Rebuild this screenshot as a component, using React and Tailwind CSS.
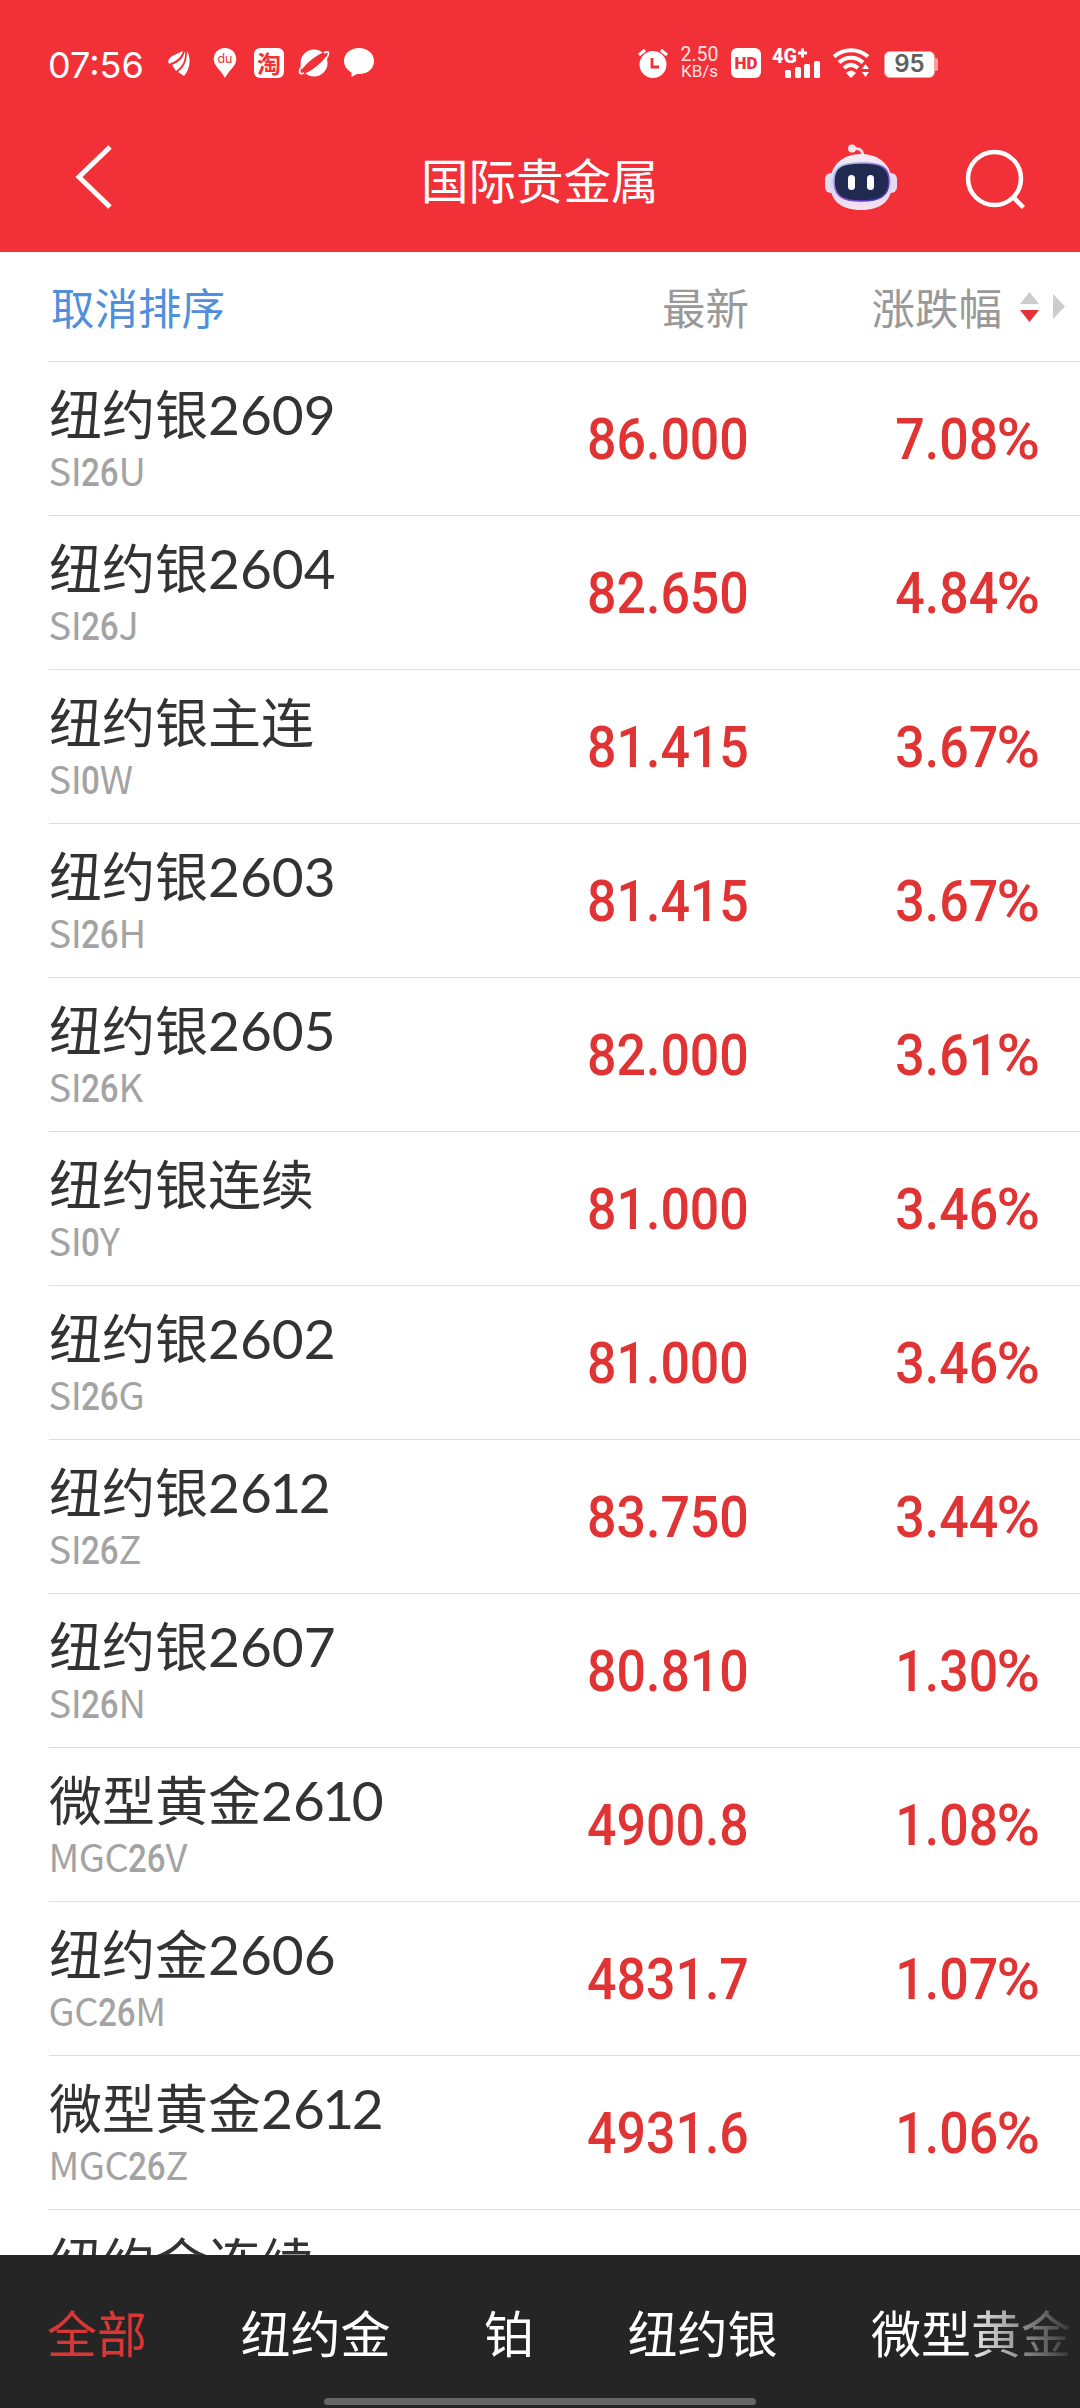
const quotes = [
  { name: "纽约银", month: "2609", code: "SI26U", price: "86.000", change: "7.08" },
  { name: "纽约银", month: "2604", code: "SI26J", price: "82.650", change: "4.84" },
  { name: "纽约银主连", month: "", code: "SI0W", price: "81.415", change: "3.67" },
  { name: "纽约银", month: "2603", code: "SI26H", price: "81.415", change: "3.67" },
  { name: "纽约银", month: "2605", code: "SI26K", price: "82.000", change: "3.61" },
  { name: "纽约银连续", month: "", code: "SI0Y", price: "81.000", change: "3.46" },
  { name: "纽约银", month: "2602", code: "SI26G", price: "81.000", change: "3.46" },
  { name: "纽约银", month: "2612", code: "SI26Z", price: "83.750", change: "3.44" },
  { name: "纽约银", month: "2607", code: "SI26N", price: "80.810", change: "1.30" },
  { name: "微型黄金", month: "2610", code: "MGC26V", price: "4900.8", change: "1.08" },
  { name: "纽约金", month: "2606", code: "GC26M", price: "4831.7", change: "1.07" },
  { name: "微型黄金", month: "2612", code: "MGC26Z", price: "4931.6", change: "1.06" },
  { name: "纽约金连续", month: "", code: "", price: "", change: "" },
];

const tabs = ["全部", "纽约金", "铂", "纽约银", "微型黄金"];

export default function App() {
  return (
    <div className="flex h-[2408px] w-[1080px] flex-col overflow-hidden bg-white font-['Noto_Sans_CJK_SC',sans-serif]">
      <header className="h-[252px] shrink-0 bg-[#f23037] text-white">
        <StatusBar />
        <TitleBar />
      </header>

      <main className="min-h-0 flex-1 overflow-hidden pl-[49px]">
        <ColumnHeader />
        {quotes.map((q) => (
          <QuoteRow key={q.name + q.month} quote={q} />
        ))}
      </main>

      <BottomTabs />
    </div>
  );
}

function StatusBar() {
  return (
    <div className="flex h-[124px] items-center pt-1 pl-[48px]">
      <span className="mt-0.5 w-[120px] font-['Inter',sans-serif] text-[36px] leading-none whitespace-nowrap">07:56</span>

      {/* Notification icons */}
      <div className="mb-0.5 flex h-8 items-center">
        <svg width="22" height="26" viewBox="0 0 22 26" className="fill-white">
          <path d="M0 11C3 5 9 4 15 1C13 8 8 11 1 14Z" />
          <path d="M17 1C15 9 11 12 4 15L8 21C14 17 18 10 17 1Z" />
          <path d="M19 1C19 12 16 17 10 22L16 26C21 20 24 10 19 1Z" />
        </svg>
        <svg width="24" height="30" viewBox="0 0 24 30" className="ml-[23px]">
          <path d="M12 0C5 0 .7 5 .7 11.5C.7 18 8 22 12 30C16 22 23.3 18 23.3 11.5C23.3 5 19 0 12 0Z" fill="#fff" />
          <text x="12" y="15" textAnchor="middle" fontSize="12.5" fontFamily="Inter" fill="#f23037">du</text>
        </svg>
        <span className="ml-[17px] flex size-[30px] items-center justify-center rounded-[6px] bg-white text-[24px] leading-none font-bold text-[#f23037]">淘</span>
        <svg width="32" height="30" viewBox="0 0 32 30" className="ml-[14px]">
          <circle cx="16" cy="15" r="13.5" fill="#fff" />
          <ellipse cx="16" cy="15" rx="17" ry="4.2" transform="rotate(-39 16 15)" fill="#f23037" />
          <path d="M4 18C0 24 1 27 6 25M26 5C31 2 32 5 28 11" fill="none" stroke="#fff" strokeWidth="1.8" />
        </svg>
        <svg width="30" height="30" viewBox="0 0 30 30" className="ml-[14px] fill-white">
          <path d="M15 0C6.5 0 0 5.5 0 13C0 18 3 22 7.5 24.5L7.5 29L13 26C23 27 30 21 30 13C30 5.5 23.5 0 15 0Z" />
        </svg>
      </div>

      {/* System icons */}
      <div className="mb-0.5 ml-[264px] flex h-8 items-center">
        <svg width="30" height="30" viewBox="0 0 30 30">
          <circle cx="15" cy="16.5" r="13.5" fill="#fff" />
          <path d="M1 7L7 2M29 7L23 2" stroke="#fff" strokeWidth="3" />
          <path d="M14 10V19H21" fill="none" stroke="#f23037" strokeWidth="2.8" />
        </svg>
        <span className="ml-[11px] flex w-[41px] flex-col items-center font-['Roboto',sans-serif] text-[17px] leading-[16px] whitespace-nowrap text-[#ffe3e4]">
          <span className="text-[19.5px]">2.50</span>
          <span>KB/s</span>
        </span>
        <span className="ml-[11px] flex size-[30px] items-center justify-center rounded-[6px] bg-white font-['Roboto',sans-serif] text-[17px] leading-none font-black text-[#f23037]">HD</span>
        <svg width="50" height="32" viewBox="0 0 50 32" className="ml-[11px] overflow-visible fill-white">
          <text x="0" y="16" fontSize="19.5" fontWeight="800" fontFamily="Roboto" textLength="25" lengthAdjust="spacingAndGlyphs">4G</text>
          <path d="M26 4.5H29V1.5H32V4.5H35V7.5H32V10.5H29V7.5H26Z" />
          <rect x="13" y="23" width="6" height="8" rx="1.5" />
          <rect x="23" y="20" width="6" height="11" rx="1.5" />
          <rect x="32" y="17" width="6" height="14" rx="1.5" />
          <rect x="42" y="14" width="6" height="17" rx="1.5" />
        </svg>
        <svg width="38" height="30" viewBox="0 0 38 30" className="ml-[10px]">
          <path d="M2 8.5C12 0 26 0 36 8.5M7 14.5C14 8 24 8 31 14.5M12 20C16.5 16 21.5 16 26 20" fill="none" stroke="#fff" strokeWidth="4" />
          <path d="M14 25Q19 20 24 25L19 30Z" fill="#fff" />
          <path d="M30 21L33.5 16L37 21ZM30 24L33.5 29L37 24Z" fill="#fff" />
        </svg>
        <div className="mt-0.5 ml-[14px] flex items-center">
          <span className="flex h-[27px] w-[51px] items-center justify-center rounded-[6px] border border-[#f9a0a4] bg-white font-['Inter',sans-serif] text-[24px] leading-none font-semibold text-[#606060]">95</span>
          <span className="h-[13px] w-[3px] rounded-r-[2px] bg-[#f99ba0]" />
        </div>
      </div>
    </div>
  );
}

function TitleBar() {
  return (
    <div className="flex h-[128px] items-center">
      <svg width="42" height="66" viewBox="0 0 42 66" className="mb-[22px] ml-[74px] fill-none stroke-white">
        <path d="M36 3L5 33L36 63" strokeWidth="5" />
      </svg>
      <h1 className="mb-[18px] ml-[305px] w-[240px] text-[47.5px] leading-none whitespace-nowrap">国际贵金属</h1>
      <Robot />
      <svg width="62" height="62" viewBox="0 0 62 62" className="mb-[16px] ml-[67px] fill-none stroke-white">
        <circle cx="29.5" cy="29.5" r="26.5" strokeWidth="4.5" />
        <path d="M48 48L58.5 58.5" strokeWidth="4.5" />
      </svg>
    </div>
  );
}

function Robot() {
  return (
    <svg width="74" height="68" viewBox="0 0 74 68" className="mb-[23px] ml-[163px]">
      <defs>
        <linearGradient id="shell" x1="0" y1="0" x2="0" y2="1">
          <stop offset="0" stopColor="#fbeef6" />
          <stop offset="0.5" stopColor="#d6d2f2" />
          <stop offset="1" stopColor="#f6e3f0" />
        </linearGradient>
        <linearGradient id="rim" x1="0" y1="0" x2="1" y2="1">
          <stop offset="0" stopColor="#a9e0f2" />
          <stop offset="0.5" stopColor="#8a4fd6" />
          <stop offset="1" stopColor="#3b2cae" />
        </linearGradient>
      </defs>
      <path d="M28 6C35 4 39 7 39 14" fill="none" stroke="#f7d9e6" strokeWidth="3" />
      <circle cx="28" cy="5.5" r="4" fill="#f7e3ee" />
      <rect x="1" y="30" width="14" height="20" rx="6" fill="#e3dcf3" />
      <rect x="59" y="30" width="14" height="20" rx="6" fill="#e3dcf3" />
      <path d="M37 11C55 11 68 22 68 40C68 58 57 67 37 67C17 67 6 58 6 40C6 22 19 11 37 11Z" fill="url(#shell)" />
      <path d="M37 20C57 20 65 24 65 38C65 53 56 58 37 58C18 58 10 53 10 38C10 24 17 20 37 20Z" fill="#202a50" stroke="url(#rim)" strokeWidth="1.5" />
      <rect x="24" y="32" width="7" height="15" rx="3.5" fill="#fff" />
      <rect x="43" y="32" width="7" height="15" rx="3.5" fill="#fff" />
    </svg>
  );
}

function ColumnHeader() {
  return (
    <div className="flex h-[110px] items-center border-b border-[#dedede] text-[43.5px] leading-none text-[#999]">
      <span className="w-[500px] pl-[2px] text-[#4f8fdb]">取消排序</span>
      <span className="w-[200px] text-right">最新</span>
      <span className="w-[253px] text-right">涨跌幅</span>
      <svg width="46" height="32" viewBox="0 0 46 32" className="mt-[1px] ml-[18px]">
        <path d="M0 13L9.5 1L19 13Z" fill="#ccc" />
        <path d="M0 19H19L9.5 31Z" fill="#e33235" />
        <path d="M33 3L45 15.5L33 28Z" fill="#ccc" />
      </svg>
    </div>
  );
}

function QuoteRow({ quote }) {
  return (
    <div className="flex h-[154px] border-b border-[#dedede]">
      <div className="w-[450px]">
        <div className="mt-[23px] h-[54px] text-[53px] leading-[54px] whitespace-nowrap text-[#333]">
          {quote.name}
          <Month value={quote.month} />
        </div>
        <div className="mt-[11px] h-[40px] text-[38px] leading-[40px] text-[#a3a3a3]">
          <Code value={quote.code} />
        </div>
      </div>
      <Figure className="w-[250px]">{quote.price}</Figure>
      <Figure className="w-[291px]">
        {quote.change}
        {quote.change && <span className="inline-block origin-right scale-x-[1.14] pl-[4px]">%</span>}
      </Figure>
    </div>
  );
}

// The "1" sits tighter than the other digits
function Month({ value }) {
  return (
    <span className="font-['Lato',sans-serif] text-[55px] leading-none">
      {value.split("1").map((part, i) => (
        <span key={i}>
          {i > 0 && <span className="-mx-[2.5px]">1</span>}
          {part}
        </span>
      ))}
    </span>
  );
}

// Letters stay light, digits are narrow and heavier
function Code({ value }) {
  return value.split(/(\d+)/).map((part, i) =>
    i % 2 ? (
      <span
        key={i}
        className="inline-block origin-left scale-x-[0.85] font-['Roboto',sans-serif] text-[39px] leading-none font-medium"
        style={{ marginRight: part.length * -3.3 }}
      >
        {part}
      </span>
    ) : (
      <span key={i} className="-ml-[0.5px] tracking-[-0.5px]">{part}</span>
    )
  );
}

function Figure({ className, children }) {
  return (
    <div className={`flex items-center justify-end pt-[2px] font-['Roboto',sans-serif] text-[57px] leading-none font-medium text-[#e03333] ${className}`}>
      <span className="origin-right scale-x-[0.91] whitespace-nowrap">{children}</span>
    </div>
  );
}

function BottomTabs() {
  return (
    <nav className="relative h-[153px] shrink-0 overflow-hidden bg-[#252525]">
      <div className="flex gap-[93.5px] pt-[50px] pl-[47px] text-[50px] leading-[52px] whitespace-nowrap text-white">
        {tabs.map((tab, i) => (
          <span key={tab} className={i === 0 ? "text-[#dc3535]" : ""}>{tab}</span>
        ))}
      </div>
      <div className="absolute top-0 right-0 h-[140px] w-[120px] bg-linear-to-r from-transparent to-[#252525]" />
      <div className="absolute bottom-[3px] left-[324px] h-[7px] w-[432px] rounded-full bg-[#666]" />
    </nav>
  );
}
